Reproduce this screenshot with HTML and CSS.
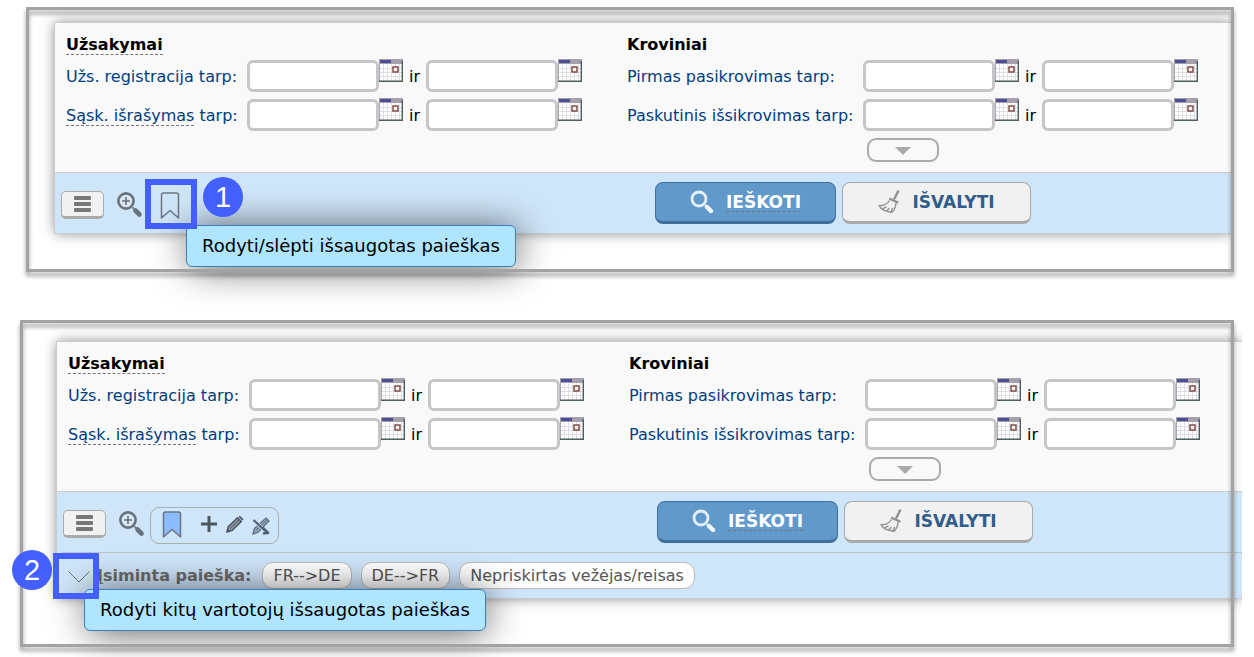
FILE: index.html
```html
<!DOCTYPE html>
<html lang="lt">
<head>
	<meta charset="utf-8">
	<title>Užsakymų paieška</title>
	<link rel="stylesheet" href="styles.css">
</head>
<body>
	<!-- icons used in both panels -->
	<svg class="sprite" xmlns="http://www.w3.org/2000/svg">
		<symbol id="calendar" viewBox="0 0 24 23">
			<rect width="24" height="23" fill="#fdfdfb"/>
			<path d="M0 9.500h23M0 13.500h23M0 17.500h23M4.500 5v17M8.500 5v17M12.500 5v17M16.500 5v17M20.500 5v17" stroke="#dedee4" fill="none"/>
			<rect width="24" height="5" fill="#a5a0ac"/>
			<rect x="1" y="1" width="11" height="3" fill="#4d4f96"/>
			<path d="M.5 5v17" stroke="#a7a7b5"/>
			<rect x="14" y="8" width="5" height="5" fill="#fdf3ee" stroke="#7d4f49" stroke-width="1.500"/>
			<path d="M23.300 2v20.300H0" stroke="#4e5d60" stroke-width="1.400" fill="none"/>
		</symbol>
		<symbol id="zoomin" viewBox="0 0 26 27">
			<circle cx="9" cy="9" r="7.600" fill="#dce8f3" stroke="#67727d" stroke-width="2.600"/>
			<path d="M9 5v8M5 9h8" stroke="#67727d" stroke-width="1.600"/>
			<path d="M15 15l3 3" stroke="#7f8b96" stroke-width="2"/>
			<path d="M18.500 18.500l4 4" stroke="#67727d" stroke-width="4.600" stroke-linecap="round"/>
		</symbol>
		<symbol id="bookmark" viewBox="0 0 20 27">
			<path d="M1.500 26V3Q1.500 1 3.500 1h13Q18.500 1 18.500 3v23L10 18.500z" stroke="#6c7681" stroke-width="1.500" stroke-linejoin="round"/>
		</symbol>
		<symbol id="search" viewBox="0 0 24 24">
			<circle cx="9" cy="9" r="7" fill="none" stroke="#e6eff8" stroke-width="2.800"/>
			<path d="M14 14l2.500 2.500" stroke="#c5daed" stroke-width="2"/>
			<path d="M17 17l4 4" stroke="#f3f8fc" stroke-width="4.400" stroke-linecap="round"/>
		</symbol>
		<symbol id="broom" viewBox="0 0 22 24">
			<g fill="none" stroke="#8f8f8f" stroke-linecap="round">
				<path d="M20 1.500l-3.500 7" stroke-width="2.400"/>
				<path d="M12 9l7.500 3.300" stroke-width="2.200"/>
				<path d="M11 11Q8 16 1.200 15.700Q3.500 21 14 22.300Q17.500 19 18 13.500M5 18.700l3-1.500M9 20.800l2-2.300M13 21.500l1.500-3" stroke-width="1.400"/>
			</g>
		</symbol>
		<symbol id="plus" viewBox="0 0 18 18">
			<path d="M9 1v16M1 9h16" stroke="#4b5661" stroke-width="3"/>
		</symbol>
		<symbol id="pencil" viewBox="0 0 18 18">
			<path d="M1 17l1.300-5.500L11.500 2.800l3.800 3.700L6.200 15.500z" fill="#8d99a4" stroke="#47515b" stroke-width="1.400"/>
			<path d="M4 13.500l9-8.500" stroke="#47515b"/>
			<path d="M12.500 1.800l1.300-1.100 3.700 3.600-1.200 1.200z" fill="#47515b"/>
			<path d="M1 17l1-3 2 2z" fill="#47515b"/>
		</symbol>
		<symbol id="pencilx" viewBox="0 0 18 18">
			<path d="M1 17l1.300-5.500L14 1l3 3L5.800 15.500z" fill="#94a5b5" stroke="#596b7b" stroke-width="1.200"/>
			<path d="M4 13L15 3" stroke="#596b7b"/>
			<path d="M1.500 3l12 11" stroke="#cfe5f9" stroke-width="3.400"/>
			<path d="M1.500 3l11 10" stroke="#4f6070" stroke-width="2.200"/>
			<path d="M10.500 10.500l6 6M11 16.500l6-1" stroke="#4f6070" stroke-width="2.600"/>
		</symbol>
	</svg>

	<section class="frame frame-one">
		<div class="panel">
			<form class="filters">
				<div class="group orders">
					<h4><span class="hint">Užsakymai</span></h4>
					<div class="row">
						<label for="reg1">Užs. registracija tarp:</label>
						<input type="text" id="reg1"><svg class="cal"><use href="#calendar"/></svg>
						<span class="and">ir</span>
						<input type="text" aria-label="Užs. registracija iki"><svg class="cal"><use href="#calendar"/></svg>
					</div>
					<div class="row">
						<label for="inv1"><span class="hint">Sąsk. išrašymas</span> tarp:</label>
						<input type="text" id="inv1"><svg class="cal"><use href="#calendar"/></svg>
						<span class="and">ir</span>
						<input type="text" aria-label="Sąsk. išrašymas iki"><svg class="cal"><use href="#calendar"/></svg>
					</div>
				</div>
				<div class="group cargo">
					<h4>Kroviniai</h4>
					<div class="row">
						<label for="first1">Pirmas pasikrovimas tarp:</label>
						<input type="text" id="first1"><svg class="cal"><use href="#calendar"/></svg>
						<span class="and">ir</span>
						<input type="text" aria-label="Pirmas pasikrovimas iki"><svg class="cal"><use href="#calendar"/></svg>
					</div>
					<div class="row">
						<label for="last1">Paskutinis išsikrovimas tarp:</label>
						<input type="text" id="last1"><svg class="cal"><use href="#calendar"/></svg>
						<span class="and">ir</span>
						<input type="text" aria-label="Paskutinis išsikrovimas iki"><svg class="cal"><use href="#calendar"/></svg>
					</div>
					<button type="button" class="more" aria-label="Daugiau"><span class="arrow"></span></button>
				</div>
			</form>
			<div class="toolbar">
				<div class="tools">
					<button class="menu" aria-label="Meniu"><span></span><span></span><span></span></button>
					<button class="icon" aria-label="Priartinti"><svg width="26" height="27"><use href="#zoomin"/></svg></button>
					<div class="saved-tools">
						<div class="anchor">
							<button class="icon" aria-label="Išsaugotos paieškos"><svg class="mark" width="20" height="27"><use href="#bookmark"/></svg></button>
							<div class="tooltip tip-one">Rodyti/slėpti išsaugotas paieškas</div>
							<span class="marker marker-one"></span>
							<span class="step step-one">1</span>
						</div>
					</div>
				</div>
				<button class="btn btn-search"><svg width="24" height="24"><use href="#search"/></svg><span class="hint">IEŠKOTI</span></button>
				<button class="btn btn-clear"><svg width="22" height="24"><use href="#broom"/></svg><span>IŠVALYTI</span></button>
			</div>
		</div>
	</section>

	<section class="frame frame-two">
		<div class="panel">
			<form class="filters">
				<div class="group orders">
					<h4><span class="hint">Užsakymai</span></h4>
					<div class="row">
						<label for="reg2">Užs. registracija tarp:</label>
						<input type="text" id="reg2"><svg class="cal"><use href="#calendar"/></svg>
						<span class="and">ir</span>
						<input type="text" aria-label="Užs. registracija iki"><svg class="cal"><use href="#calendar"/></svg>
					</div>
					<div class="row">
						<label for="inv2"><span class="hint">Sąsk. išrašymas</span> tarp:</label>
						<input type="text" id="inv2"><svg class="cal"><use href="#calendar"/></svg>
						<span class="and">ir</span>
						<input type="text" aria-label="Sąsk. išrašymas iki"><svg class="cal"><use href="#calendar"/></svg>
					</div>
				</div>
				<div class="group cargo">
					<h4>Kroviniai</h4>
					<div class="row">
						<label for="first2">Pirmas pasikrovimas tarp:</label>
						<input type="text" id="first2"><svg class="cal"><use href="#calendar"/></svg>
						<span class="and">ir</span>
						<input type="text" aria-label="Pirmas pasikrovimas iki"><svg class="cal"><use href="#calendar"/></svg>
					</div>
					<div class="row">
						<label for="last2">Paskutinis išsikrovimas tarp:</label>
						<input type="text" id="last2"><svg class="cal"><use href="#calendar"/></svg>
						<span class="and">ir</span>
						<input type="text" aria-label="Paskutinis išsikrovimas iki"><svg class="cal"><use href="#calendar"/></svg>
					</div>
					<button type="button" class="more" aria-label="Daugiau"><span class="arrow"></span></button>
				</div>
			</form>
			<div class="toolbar">
				<div class="tools">
					<button class="menu" aria-label="Meniu"><span></span><span></span><span></span></button>
					<button class="icon" aria-label="Priartinti"><svg width="26" height="27"><use href="#zoomin"/></svg></button>
					<div class="saved-tools open">
						<button class="icon" aria-label="Išsaugotos paieškos"><svg class="mark filled" width="20" height="27"><use href="#bookmark"/></svg></button>
						<div class="edit-tools">
							<button class="icon" aria-label="Pridėti"><svg width="18" height="18"><use href="#plus"/></svg></button>
							<button class="icon" aria-label="Redaguoti"><svg width="18" height="18"><use href="#pencil"/></svg></button>
							<button class="icon low" aria-label="Baigti redagavimą"><svg width="18" height="18"><use href="#pencilx"/></svg></button>
						</div>
					</div>
				</div>
				<button class="btn btn-search"><svg width="24" height="24"><use href="#search"/></svg><span class="hint">IEŠKOTI</span></button>
				<button class="btn btn-clear"><svg width="22" height="24"><use href="#broom"/></svg><span>IŠVALYTI</span></button>
			</div>
			<div class="saved">
				<div class="anchor">
					<button class="icon" aria-label="Kitų vartotojų paieškos"><svg width="22" height="12" viewBox="0 0 22 12"><path d="M.5.500L11 11 21.500.5" fill="none" stroke="#6c7681"/></svg></button>
					<div class="tooltip tip-two">Rodyti kitų vartotojų išsaugotas paieškas</div>
					<span class="marker marker-two"></span>
					<span class="step step-two">2</span>
				</div>
				<b>Įsiminta paieška:</b>
				<button class="chip">FR--&gt;DE</button>
				<button class="chip">DE--&gt;FR</button>
				<button class="chip">Nepriskirtas vežėjas/reisas</button>
			</div>
		</div>
	</section>
</body>
</html>
```
FILE: styles.css
```css
*{
  box-sizing: border-box;
}
body{
  margin: 0;
  padding: 7px 20px 10px;
  background: #fff;
  color: #000;
  font: 16px/18px Verdana, "DejaVu Sans", sans-serif;
}
button, input{
  font: inherit;
  margin: 0;
}
button{
  cursor: pointer;
}
svg{
  display: block;
}
.sprite{
  position: absolute;
  width: 0;
  height: 0;
}

/* grey frame, its line lies over the panel */
.frame{
  position: relative;
}
.frame::after{
  content: "";
  position: absolute;
  inset: 0;
  z-index: 1;
  border: 3px solid #a3a3a3;
  filter: drop-shadow(0 4px 2px rgba(0,0,0,.4));
  pointer-events: none;
}
.frame-one{
  margin: 0 0 48px 6px;
  padding: 15px 3px 38px 28px;
}
.frame-two{
  padding: 21px 3px 48px 36px;
}
.frame-two .panel{
  margin-right: -11px;
}

.panel{
  position: relative;
  border: 1px solid #ccc;
  border-right: none;
}
.panel::before{
  content: "";
  position: absolute;
  inset: 0;
  z-index: -1;
  box-shadow: 0 0 12px rgba(0,0,0,.5);
  clip-path: inset(-30px 0 -30px -30px);
}
.filters{
  display: flex;
  gap: 45px;
  padding: 12px 11px 10px;
  background: #f9f9f9;
}
.group{
  display: flex;
  flex-direction: column;
  gap: 7px;
}
h4{
  height: 18px;
  margin: 0;
  font-size: 16px;
  line-height: 20px;
}
.hint{
  border-bottom: 1px dashed #777;
}
.row{
  display: flex;
  align-items: center;
  height: 32px;
}
label{
  padding-top: 2px;
  color: #003d80;
  white-space: nowrap;
}
.orders label{
  width: 181px;
}
.cargo label{
  width: 236px;
}
.row input{
  width: 132px;
  height: 32px;
  padding: 0 6px;
  border: 3px solid #c6c6c6;
  border-radius: 6px;
  background: #fff;
}
.cal{
  width: 24px;
  height: 23px;
  margin-top: -1px;
  align-self: flex-start;
}
.and{
  width: 23px;
  padding-top: 2px;
  text-align: center;
}
.more{
  display: flex;
  align-items: center;
  justify-content: center;
  width: 72px;
  height: 24px;
  margin-left: 240px;
  padding: 0;
  border: 2px solid #aaa;
  border-radius: 9px;
  background: #f9f9f9;
}
.arrow{
  margin-top: 2px;
  border: 8px solid transparent;
  border-top-color: #aaa;
  border-bottom: none;
}

.toolbar{
  display: flex;
  align-items: center;
  gap: 6px;
  height: 61px;
  padding-left: 6px;
  border-top: 1px solid #ccc;
  background: #cfe5f9;
}
.tools{
  display: flex;
  align-items: center;
  width: 588px;
  padding-top: 4px;
}
.menu{
  display: flex;
  flex-direction: column;
  align-items: center;
  justify-content: center;
  gap: 2px;
  width: 43px;
  height: 28px;
  margin-right: 13px;
  padding: 0;
  border: 1px solid #aaa;
  border-bottom-width: 3px;
  border-radius: 5px;
  background: #f1f1f1;
}
.menu span{
  width: 17px;
  height: 4px;
  border-radius: 1px;
  background: #777;
}
.icon{
  display: block;
  padding: 0;
  border: none;
  background: none;
}
.mark{
  fill: none;
}
.mark.filled{
  fill: #8abcff;
}
.saved-tools{
  display: flex;
  align-items: center;
  height: 37px;
  margin: 2px 0 0 5px;
  padding: 0 8px 2px 11px;
  border: 1px solid transparent;
  border-radius: 9px;
}
.saved-tools.open{
  border-color: #a5adb5;
}
.edit-tools{
  display: flex;
  gap: 8px;
  margin-left: 18px;
}
.low{
  padding-top: 4px;
}
.btn{
  display: flex;
  align-items: center;
  justify-content: center;
  gap: 12px;
  height: 42px;
  padding: 0;
  border: 1px solid #aaa;
  border-bottom-width: 3px;
  border-radius: 8px;
  background: #f1f1f1;
  color: #305d8c;
  font-size: 17px;
  font-weight: bold;
}
.btn-search{
  width: 181px;
  border-color: #416f9b;
  background: #6199cb;
  color: #fff;
}
.btn-clear{
  width: 189px;
}

.saved{
  display: flex;
  align-items: center;
  margin-left: 5px;
  padding: 9px 6px;
  border-top: 1px solid #bcc4cb;
}
.frame-two .panel{
  background: #cfe5f9;
}
.saved b{
  margin: 0 11px 0 7px;
  color: #6b6b6b;
}
.chip{
  height: 27px;
  margin-right: 9px;
  padding: 0 10px;
  border: 1px solid #bbb;
  border-radius: 11px;
  background: #fff;
  color: #555;
}

/* tooltips and numbered steps */
.anchor{
  position: relative;
}
.saved .anchor{
  margin-top: 2px;
}
.tooltip{
  position: absolute;
  padding: 11px 15px;
  border: 1px solid #3a80be;
  border-radius: 6px;
  background: #b0e5ff;
  box-shadow: 2px 2px 38px -3px rgba(0,0,0,.75);
  font-size: 18px;
  line-height: 18px;
  white-space: nowrap;
}
.tip-one{
  left: 26px;
  top: 33px;
}
.tip-two{
  left: 16px;
  top: 18px;
}
.marker{
  position: absolute;
  z-index: 2;
  border: 6px solid #435fff;
}
.marker-one{
  left: -15px;
  top: -13px;
  width: 52px;
  height: 50px;
}
.marker-two{
  left: -15px;
  top: -18px;
  width: 46px;
  height: 46px;
}
.step{
  position: absolute;
  z-index: 2;
  width: 40px;
  height: 40px;
  border-radius: 50%;
  background: #435fff;
  color: #fff;
  font: 29px/40px "Liberation Sans", sans-serif;
  text-align: center;
}
.step-one{
  left: 43px;
  top: -15px;
}
.step-two{
  left: -56px;
  top: -21px;
}
```
